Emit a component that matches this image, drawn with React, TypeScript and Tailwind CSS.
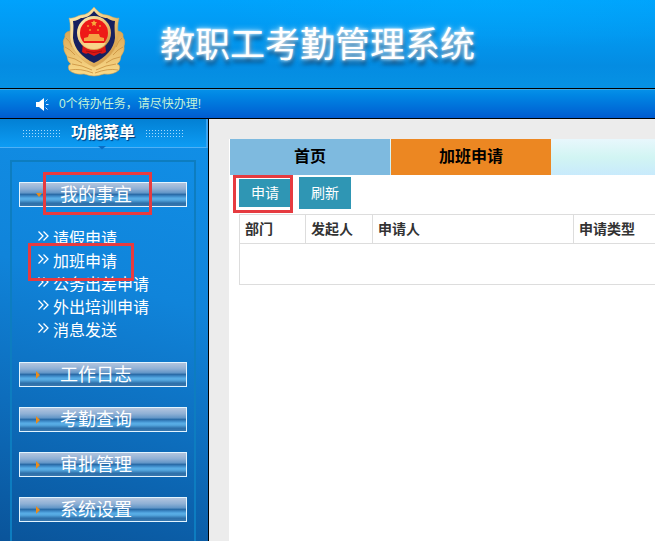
import { useState } from "react";

const subItems = ["请假申请", "加班申请", "公务出差申请", "外出培训申请", "消息发送"];
const menuItems = ["工作日志", "考勤查询", "审批管理", "系统设置"];

const Emblem = () => (
    <svg width="64" height="70" viewBox="0 0 64 70" aria-hidden="true">
        <defs>
            <linearGradient id="gold" x1="0" y1="0" x2="1" y2="1">
                <stop offset="0" stopColor="#fff0bd" />
                <stop offset="0.5" stopColor="#f0c878" />
                <stop offset="1" stopColor="#c98a35" />
            </linearGradient>
            <linearGradient id="leaf" x1="0" y1="0" x2="0" y2="1">
                <stop offset="0" stopColor="#dba653" />
                <stop offset="1" stopColor="#fbdc8c" />
            </linearGradient>
        </defs>
        {/* Wreath */}
        <path
            d="M8 24 Q2 25 3 30 Q0 34 2 39 Q1 44 5 49 Q5 54 9 57 Q5 58 7 63 Q12 68 22 67 Q28 69 32 69 Q36 69 42 67 Q52 68 57 63 Q59 58 55 57 Q59 54 59 49 Q63 44 62 39 Q64 34 61 30 Q62 25 56 24 Z"
            fill="url(#leaf)"
            stroke="#d6a04c"
            strokeWidth="0.6"
        />
        <g fill="none" stroke="#c98f3e" strokeWidth="0.8">
            <path d="M4 31 Q8 34 10 40 M3 40 Q8 42 13 48 M6 50 Q13 51 20 56 M10 57 Q20 58 30 63 M8 63 Q18 61 31 66" />
            <path d="M60 31 Q56 34 54 40 M61 40 Q56 42 51 48 M58 50 Q51 51 44 56 M54 57 Q44 58 34 63 M56 63 Q46 61 33 66" />
        </g>
        {/* Shield */}
        <path
            d="M32 0 C28 5 24 8 19 8 C15 9 11 12 7 11 C9 18 8 24 8 31 C9 43 19 54 32 60 C45 54 55 43 56 31 C56 24 55 18 57 11 C53 12 49 9 45 8 C40 8 36 5 32 0 Z"
            fill="url(#gold)"
            stroke="#d8a656"
            strokeWidth="0.5"
        />
        <path
            d="M32 4 C28 9 24 11 19 11 C17 12 14 14 11 14 C12 20 11 25 11 31 C12 42 21 51 32 56 C43 51 52 42 53 31 C53 25 52 20 53 14 C50 14 47 12 45 11 C40 11 36 9 32 4 Z"
            fill="#16205f"
        />
        <path d="M21 36 L43 36 L44 45 Q40 48 38 46 L32 49 L26 46 Q24 48 20 45 Z" fill="#dc1714" />
        <circle cx="32" cy="26" r="17" fill="url(#gold)" />
        <circle cx="32" cy="26" r="14" fill="#ee1a17" />
        <path d="M32 13 L33 15 L35 15 L33.500 17 L34 19 L32 18 L30 19 L30.500 17 L29 15 L31 15 Z" fill="#f7a83b" />
        <g fill="#f2942f">
            <circle cx="26" cy="19" r="1" />
            <circle cx="38" cy="19" r="1" />
            <circle cx="28" cy="23" r="1" />
            <circle cx="36" cy="23" r="1" />
        </g>
        <path d="M26 30 L27 27 L37 27 L38 30 L42 31 L42 34 L22 34 L22 31 Z" fill="#f4a345" />
        <path d="M20 36 H44 Q40 42 32 42 Q24 42 20 36 Z" fill="#f8d68a" />
        <path d="M24 44 Q32 47 40 44" fill="none" stroke="#a80f10" strokeWidth="1" />
    </svg>
);

const Speaker = () => (
    <svg width="13" height="13" viewBox="0 0 13 13" aria-hidden="true">
        <path d="M0 4 H3 L8 0 V13 L3 9 H0 Z" fill="#fff" />
        <path d="M9.500 3.500 L11.500 1.500 M10 6.500 H12.500 M9.500 9.500 L11.500 11.500" stroke="#cfe6ff" strokeWidth="1" />
    </svg>
);

const Chevrons = () => (
    <svg width="11" height="10" viewBox="0 0 11 10" fill="none" stroke="#fff" strokeWidth="1.3" aria-hidden="true">
        <path d="M0.500 0.500 L5 5 L0.500 9.500 M5.500 0.500 L10 5 L5.500 9.500" />
    </svg>
);

const Dots = () => (
    <span className="h-[9px] w-[39px] bg-[radial-gradient(circle,#a5dbff_35%,transparent_45%)] bg-[size:3px_3px]" />
);

interface menuButtonProp {
    label: string;
    open?: boolean;
    onClick?: () => void;
}

const MenuButton = ({ label, open, onClick }: menuButtonProp) => (
    <button
        type="button"
        onClick={onClick}
        className="flex h-[25px] w-full items-center border border-[#e2f4ff] bg-[linear-gradient(to_bottom,#b3c5de_0%,#8fb0d5_25%,#6497c8_42%,#2a6ca8_50%,#3c88c6_57%,#58ade6_66%,#55a8e0_74%,#2d6fa9_88%,#3878b0_100%)] pl-4 text-lg leading-none text-white"
    >
        <svg width="6" height="8" viewBox="0 0 6 8" fill="#e88b1c" aria-hidden="true">
            {open ? <path d="M0 2 H6 L3 6 Z" /> : <path d="M0 0 L4 4 L0 8 Z" />}
        </svg>
        <span className="pl-[18px]">{label}</span>
    </button>
);

const App = () => {
    const [open, setOpen] = useState(true);

    return (
        <div className="flex h-screen flex-col overflow-hidden bg-white font-['Liberation_Sans','Noto_Sans_CJK_SC',sans-serif]">
            {/* Banner */}
            <header className="flex h-[89px] shrink-0 items-center border-b border-black bg-[radial-gradient(ellipse_at_75%_0%,#00b0ff66,transparent_40%),linear-gradient(to_bottom,#00a2fc_0%,#0298f0_40%,#048ce2_75%,#0692e4_100%)] pb-1 pl-[62px]">
                <Emblem />
                <h1 className="pt-1 pl-[34px] text-[35px] leading-none whitespace-nowrap text-white [text-shadow:0_0_3px_#ffffffcc,0_0_6px_#ffffffcc,1px_5px_4px_#00264dcc]">
                    教职工考勤管理系统
                </h1>
            </header>

            {/* Notice */}
            <div className="flex h-[30px] shrink-0 items-center gap-[10px] border-t border-b border-t-[#3aa5e6] border-b-black bg-linear-to-b from-[#0590e8] to-[#005bd0] pl-9">
                <Speaker />
                <a href="#tasks" className="text-xs text-[#c4f3d8]">0个待办任务，请尽快办理!</a>
            </div>

            <div className="flex min-h-0 flex-1">
                {/* Sidebar */}
                <nav className="relative flex w-[209px] shrink-0 flex-col border-r border-black bg-[linear-gradient(195deg,#1190e8_0%,#1084da_40%,#0d6dbc_70%,#0a549a_100%)]">
                    <div className="relative flex h-[29px] shrink-0 items-center justify-center gap-[10px] border-r-2 border-b border-r-[#3aa4f2] border-b-[#4fb0f5] bg-linear-to-b from-[#0380d4] to-[#0d9cf4]">
                        <Dots />
                        <h2 className="text-base leading-none font-bold text-white [text-shadow:1px_1px_1px_#003a78]">功能菜单</h2>
                        <Dots />
                        <svg className="absolute top-[27px] left-[98px]" width="8" height="4" viewBox="0 0 8 4" aria-hidden="true">
                            <path d="M0 0 H8 L4 3.500 Z" fill="#0a6cc4" />
                        </svg>
                    </div>
                    <div className="mt-3 mr-3 ml-[10px] flex flex-1 flex-col gap-5 border-2 border-b-0 border-[#0d7dc0] px-[7px] pt-5">
                        <MenuButton label="我的事宜" open={open} onClick={() => setOpen(!open)} />
                        {open && (
                            <ul className="pl-[19px] text-base leading-[23px] text-white">
                                {subItems.map((item) => (
                                    <li key={item}>
                                        <a href="#menu" className="flex gap-1">
                                            <span className="pt-1"><Chevrons /></span>
                                            {item}
                                        </a>
                                    </li>
                                ))}
                            </ul>
                        )}
                        {menuItems.map((item) => (
                            <MenuButton key={item} label={item} />
                        ))}
                    </div>

                    {/* Highlight frames over the menu */}
                    <span className="pointer-events-none absolute top-[53px] left-[43px] h-[43px] w-[109px] border-3 border-[#e63b40]" />
                    <span className="pointer-events-none absolute top-[124px] left-7 h-[38px] w-[106px] border-3 border-[#e63b40]" />
                </nav>

                {/* Content */}
                <main className="flex min-w-0 flex-1 flex-col bg-[#ececec] pt-5 pl-5">
                    <div className="flex h-9 shrink-0 gap-px bg-linear-to-b from-[#e8f7fc] via-[#d2f5f3] to-[#c8eafc] text-base font-bold text-black">
                        <button type="button" className="box-content w-40 border-l border-white bg-[#7ebadf]">首页</button>
                        <button type="button" className="w-40 bg-[#ec8722]">加班申请</button>
                    </div>
                    <div className="flex-1 bg-white pl-[10px] text-sm">
                        <div className="flex h-[39px] items-center gap-2 pb-1">
                            <div className="relative flex">
                                <button type="button" className="h-7 w-[52px] bg-[#2f96b4] text-white">申请</button>
                                <span className="pointer-events-none absolute -top-1 -left-[6px] h-[38px] w-[60px] border-3 border-[#e63b40]" />
                            </div>
                            <button type="button" className="h-8 w-[52px] bg-[#2f96b4] text-white">刷新</button>
                        </div>
                        <table className="w-full table-fixed border-collapse text-left text-[#333]">
                            <thead>
                                <tr className="h-[29px]">
                                    <th className="w-[66px] border border-[#ddd] px-[5px] leading-5">部门</th>
                                    <th className="w-[67px] border border-[#ddd] px-[5px] leading-5">发起人</th>
                                    <th className="w-[201px] border border-[#ddd] px-[5px] leading-5">申请人</th>
                                    <th className="border-y border-l border-[#ddd] px-[5px] leading-5">申请类型</th>
                                </tr>
                            </thead>
                            <tbody>
                                <tr className="h-[41px]">
                                    <td colSpan={4} className="border-y border-l border-[#ddd]" />
                                </tr>
                            </tbody>
                        </table>
                    </div>
                </main>
            </div>
        </div>
    );
};

export default App;
